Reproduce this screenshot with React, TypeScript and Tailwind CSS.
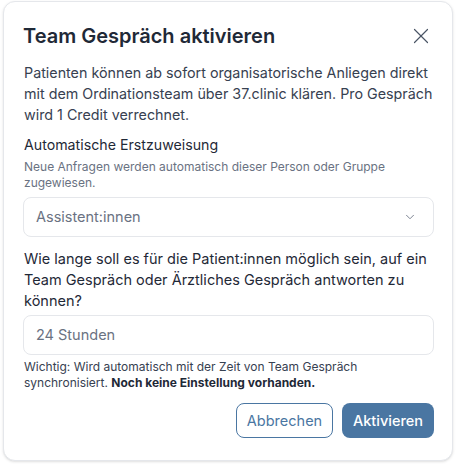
import { X, ChevronDown } from "lucide-react";

export default function App() {
  return (
    <div className="h-[464px] w-[456px] bg-white pl-[3px] pr-[3px] pt-[1px] font-['Inter',sans-serif]">
      <div className="flex h-[460px] flex-col rounded-xl border border-gray-200 bg-white pl-[19px] pr-[18px] pt-[20px] shadow-sm">
        {/* Header */}
        <div className="flex items-center justify-between">
          <h2 className="text-[20px] font-semibold leading-[28px] text-[#1f2937]">
            Team Gespräch aktivieren
          </h2>
          <button className="text-gray-600">
            <X size={26} strokeWidth={1.1} />
          </button>
        </div>

        <p className="mt-[12px] pl-px text-[14.3px] leading-[21px] text-[#374151]">
          Patienten können ab sofort organisatorische Anliegen direkt mit dem
          Ordinationsteam über 37.clinic klären. Pro Gespräch wird 1 Credit
          verrechnet.
        </p>

        <div className="mt-[9px] pl-px text-[14.2px] leading-[21px] text-[#1f2937]">
          Automatische Erstzuweisung
        </div>
        <p className="mt-[4px] pl-px text-[12px] leading-[16px] text-gray-500">
          Neue Anfragen werden automatisch dieser Person oder Gruppe
          zugewiesen.
        </p>

        <div className="mt-[6px] flex h-[40px] items-center justify-between rounded-lg border border-gray-200 px-3">
          <span className="text-[14.5px] text-gray-500">Assistent:innen</span>
          <ChevronDown size={14} strokeWidth={1.5} className="mr-[4px] text-gray-500" />
        </div>

        <p className="mt-[11px] pl-px text-[14.5px] leading-[21px] text-[#1f2937]">
          Wie lange soll es für die Patient:innen möglich sein, auf ein Team
          Gespräch oder Ärztliches Gespräch antworten zu können?
        </p>

        <div className="mt-[4px] flex h-[40px] items-center rounded-lg border border-gray-200 px-3">
          <span className="text-[14.5px] text-gray-500">24 Stunden</span>
        </div>

        <p className="mt-[4px] pl-px text-[12px] leading-[16px] text-[#374151]">
          Wichtig: Wird automatisch mit der Zeit von Team Gespräch
          synchronisiert.{" "}
          <span className="font-bold text-[#1f2937]">
            Noch keine Einstellung vorhanden.
          </span>
        </p>

        <div className="mt-[12px] flex justify-end gap-[9px]">
          <button className="h-[35px] w-[97px] rounded-lg border border-[#4a76a2] text-[14.5px] text-[#4a76a2]">
            Abbrechen
          </button>
          <button className="h-[35px] w-[92px] rounded-lg bg-[#4a76a2] text-[14.5px] font-medium text-white">
            Aktivieren
          </button>
        </div>
      </div>
    </div>
  );
}
